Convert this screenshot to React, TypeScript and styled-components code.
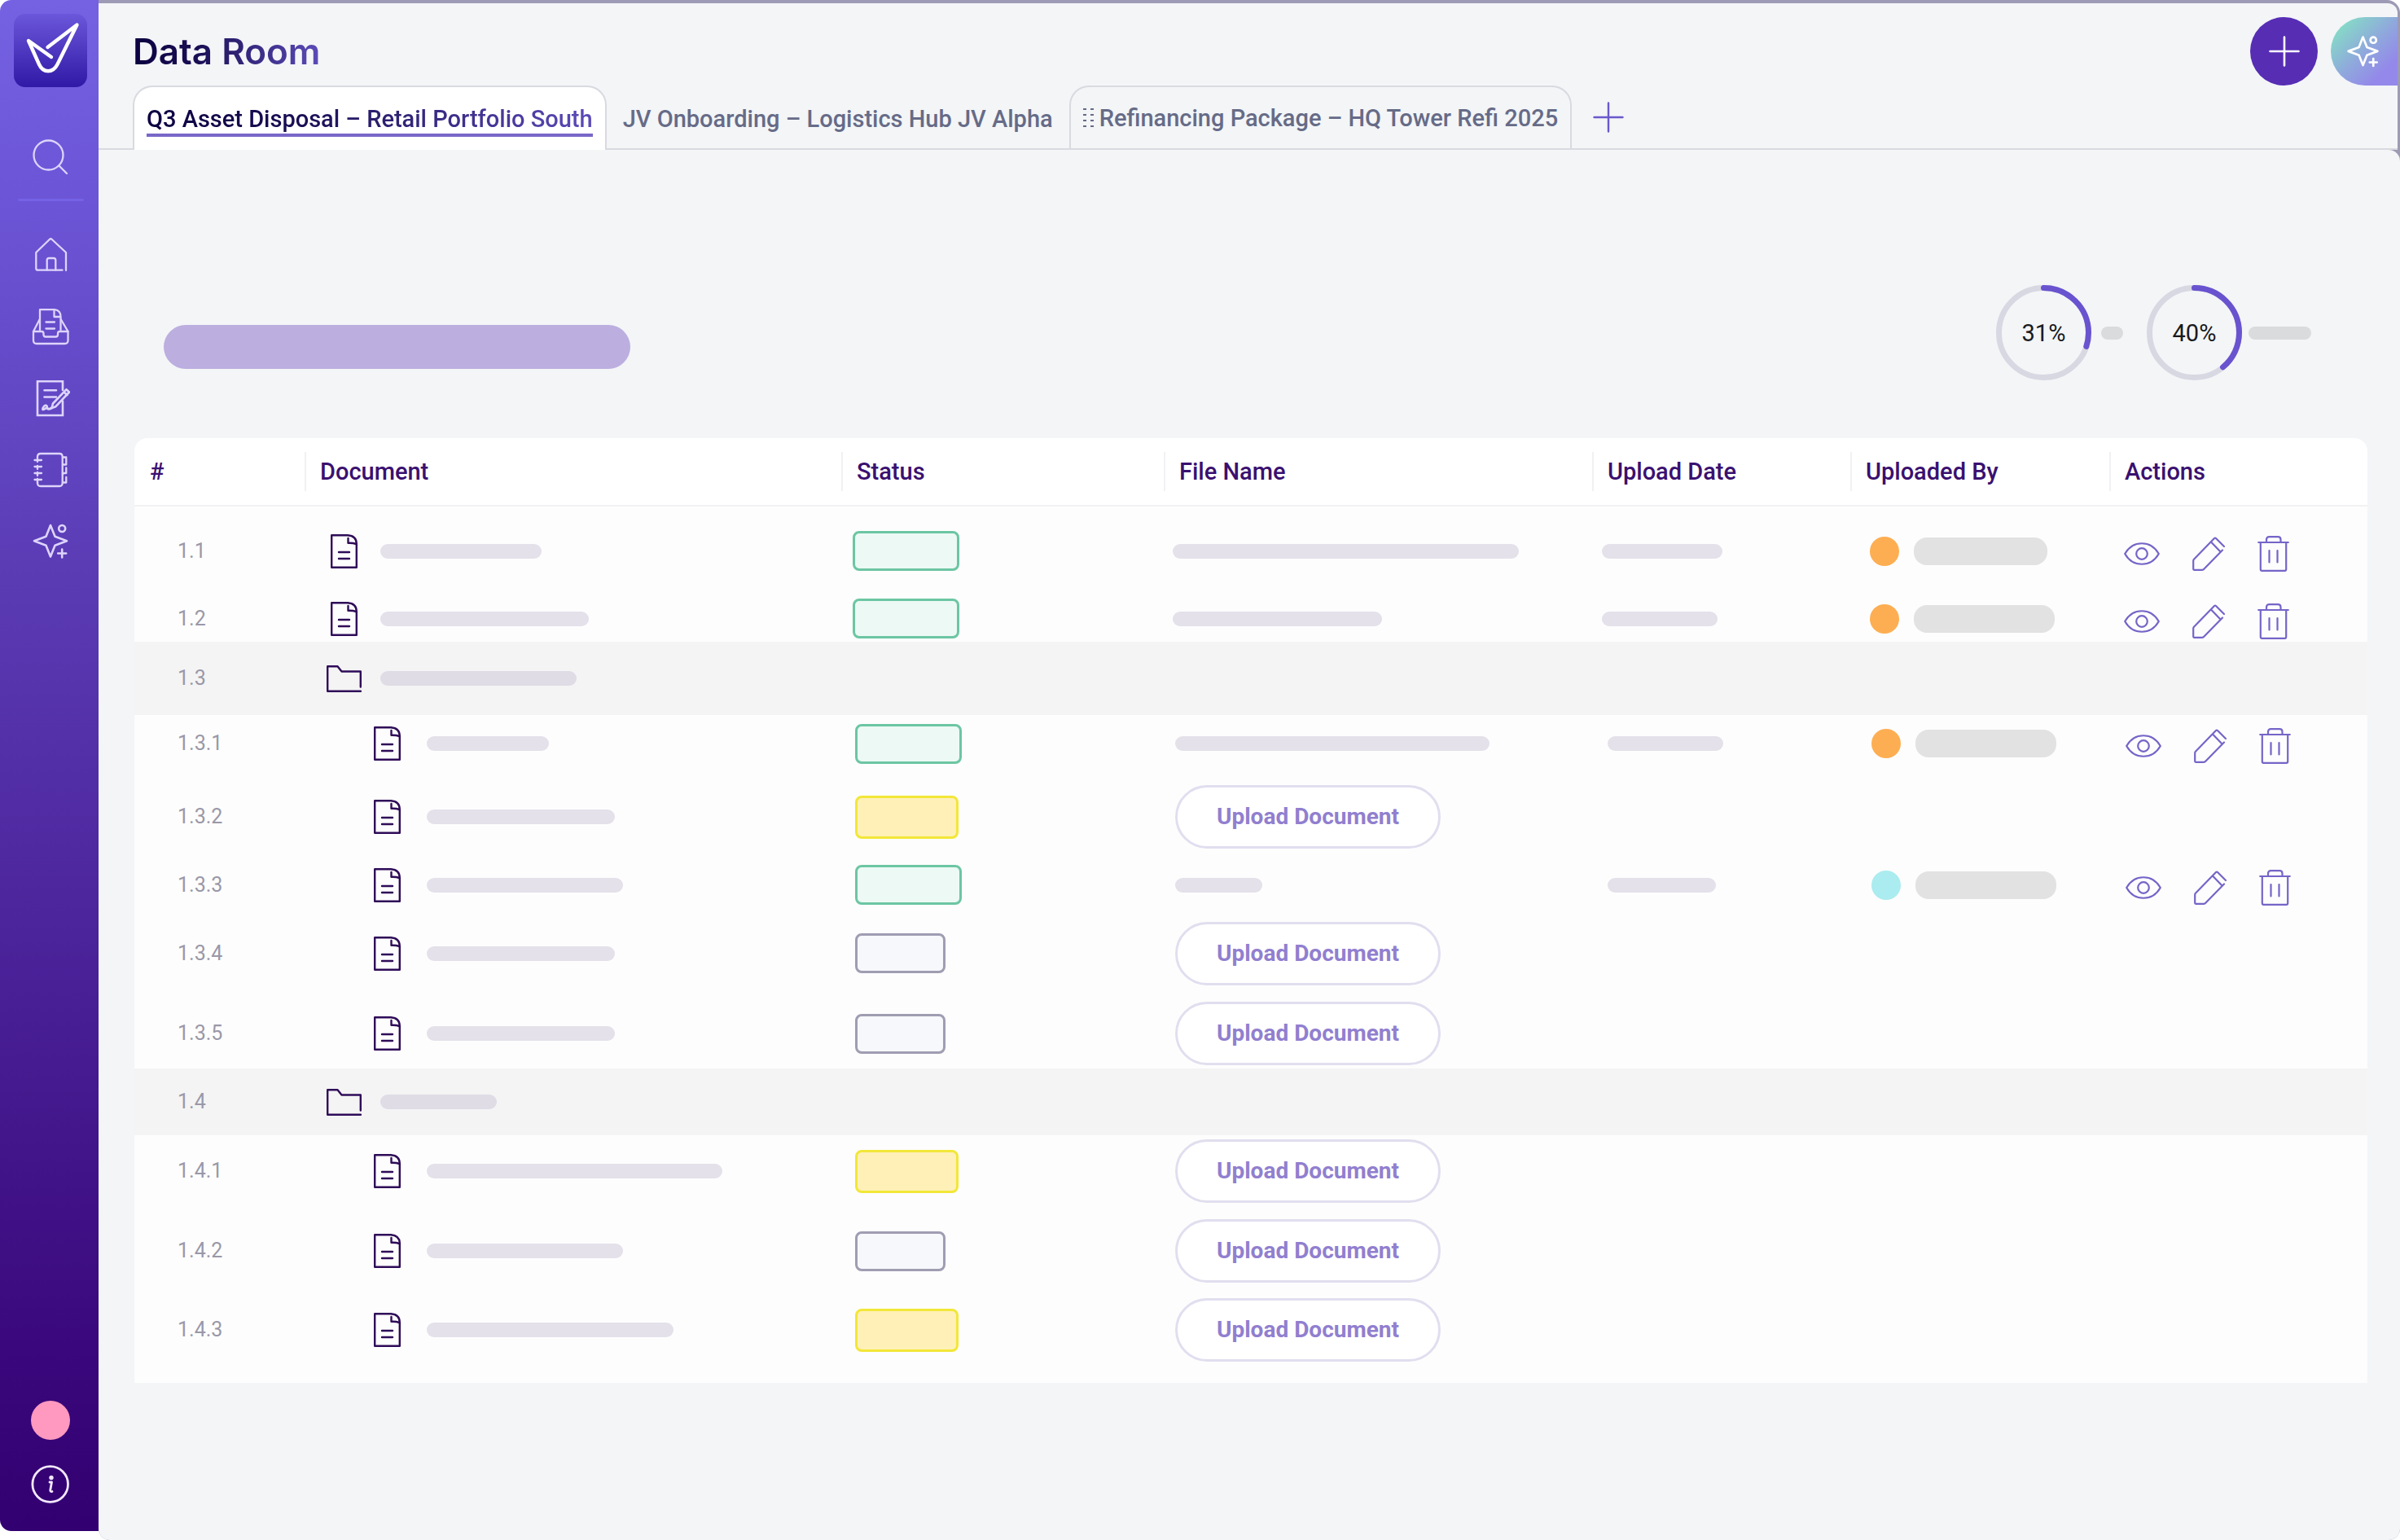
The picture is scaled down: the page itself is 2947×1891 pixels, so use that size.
import React from "react";
import styled, { createGlobalStyle, css } from "styled-components";

const GlobalStyle = createGlobalStyle`
  *, *::before, *::after { box-sizing: border-box; }
  body {
    margin: 0;
    background: #ffffff;
    font-family: Roboto, "Liberation Sans", sans-serif;
    color: #1a1a1e;
  }
  button { font: inherit; color: inherit; background: none; border: 0; padding: 0; cursor: pointer; }
  svg { display: block; fill: none; stroke: currentColor; stroke-linecap: round; stroke-linejoin: round; }
`;

/* ---------- shell ---------- */

const Shell = styled.div`
  display: grid;
  grid-template-columns: 121px minmax(0, 1fr);
  min-height: 100vh;
`;

const Sidebar = styled.aside`
  display: flex;
  flex-direction: column;
  align-items: center;
  margin-bottom: 11px;
  padding: 17px 0 34px 3px;
  border-radius: 14px 0 0 14px;
  background: linear-gradient(180deg, #7462e3 0%, #6b54d5 14%, #5b3cb5 37%, #3a087c 88%, #320070 100%);
  color: #ddd4fb;
`;

const Logo = styled.a`
  display: block;
  width: 90px;
  height: 90px;
  margin-bottom: 61px;
  border-radius: 14px;
  background: linear-gradient(180deg, #6b57da 0%, #3019a6 100%);
  color: #ffffff;
`;

const SideButton = styled.button`
  display: grid;
  place-items: center;
  width: 48px;
  height: 48px;
`;

const SideDivider = styled.hr`
  width: 81px;
  height: 3px;
  margin: 28px 0 42px;
  border: 0;
  border-radius: 2px;
  background: #7562e6;
`;

const SideNav = styled.nav`
  display: flex;
  flex-direction: column;
  gap: 40px;
`;

const SideFooter = styled.div`
  display: flex;
  flex-direction: column;
  gap: 30px;
  margin-top: auto;
  color: #f3e8ff;
`;

const UserButton = styled.button`
  width: 48px;
  height: 48px;
  border-radius: 50%;
  background: #ff99bf;
`;

const Main = styled.main`
  display: flex;
  flex-direction: column;
  min-width: 0;
  border-radius: 0 16px 14px 14px;
  background: #9c9ab4;
`;

/* ---------- header ---------- */

const Header = styled.header`
  margin: 4px 3px 0 0;
  border-radius: 0 12px 0 0;
  background: #f3f5f7;
`;

const TitleRow = styled.div`
  display: flex;
  align-items: center;
  gap: 16px;
  padding: 17px 0 0 42px;
`;

const Title = styled.h1`
  margin: 0 auto 0 0;
  font-family: Inter, "Open Sans", sans-serif;
  font-size: 44px;
  line-height: 56px;
  font-weight: 600;
  color: transparent;
  background: linear-gradient(90deg, #0b0040 0%, #1a0f55 35%, #5b4bb8 100%);
  background-clip: text;
  -webkit-background-clip: text;
`;

const AddButton = styled.button`
  display: grid;
  place-items: center;
  width: 83px;
  height: 84px;
  border-radius: 50%;
  background: #572db4;
  color: #ffffff;
`;

const AssistButton = styled.button`
  display: flex;
  align-items: center;
  width: 82px;
  height: 84px;
  padding-left: 18px;
  border-radius: 42px 0 0 42px;
  background: linear-gradient(135deg, #85dcc6 12%, #8fa9dc 50%, #9488ea 80%);
  color: #ffffff;
`;

const TabBar = styled.nav`
  display: flex;
  align-items: stretch;
  height: 79px;
  padding-left: 42px;
  border-bottom: 2px solid #d8dae0;
`;

const Tab = styled.button<{ $look: "active" | "plain" | "outlined" }>`
  display: flex;
  align-items: center;
  gap: 7px;
  margin-bottom: -2px;
  padding: 0 15px;
  border: 2px solid transparent;
  border-bottom: 0;
  border-radius: 24px 24px 0 0;
  font-size: 29px;
  line-height: 36px;
  font-weight: 500;
  white-space: nowrap;
  color: #666b87;
  ${({ $look }) => $look === "active" && css`
    background: #ffffff;
    border-color: #d8dae0;
  `}
  ${({ $look }) => $look === "plain" && css`
    padding: 0 18px;
  `}
  ${({ $look }) => $look === "outlined" && css`
    margin-bottom: 0;
    border-color: #d8dae0;
  `}
`;

const ActiveLabel = styled.span`
  padding-top: 4px;
  border-bottom: 4px solid #7967c8;
  line-height: 36px;
  color: transparent;
  background: linear-gradient(90deg, #0b0040 0%, #1a0f55 35%, #5b4bb8 100%);
  background-clip: text;
  -webkit-background-clip: text;
`;

const AddTab = styled.button`
  display: grid;
  place-items: center;
  padding: 0 26px;
  color: #6a58cc;
`;

/* ---------- summary ---------- */

const Content = styled.div`
  flex: 1;
  padding: 166px 40px 40px 44px;
  border-radius: 0 14px 14px 14px;
  background: #f3f5f7;
`;

const Summary = styled.section`
  display: flex;
  align-items: flex-end;
  padding: 0 69px 71px 36px;
`;

const SummaryName = styled.div`
  width: 573px;
  height: 54px;
  margin: 0 auto 14px 0;
  border-radius: 27px;
  background: #bcaedf;
`;

const Progress = styled.div<{ $gap: number }>`
  display: flex;
  align-items: center;
  gap: ${({ $gap }) => $gap}px;
  & + & { margin-left: 29px; }
`;

const Dial = styled.div`
  display: grid;
  place-items: center;
  font-size: 29px;
  line-height: 36px;
  & > * { grid-area: 1 / 1; }
`;

const DialNote = styled.span<{ $w: number }>`
  width: ${({ $w }) => $w}px;
  height: 16px;
  border-radius: 8px;
  background: #dadbdd;
`;

/* ---------- table ---------- */

const Table = styled.table`
  width: 100%;
  table-layout: fixed;
  border-collapse: separate;
  border-spacing: 0;
  text-align: left;
`;

const Col = styled.col<{ $w?: number }>`
  width: ${({ $w }) => ($w ? `${$w}px` : "auto")};
`;

const HeadCell = styled.th`
  padding: 17px 0;
  border-bottom: 2px solid #f2f2f4;
  background: #ffffff;
  font-size: 29px;
  line-height: 48px;
  font-weight: 500;
  color: #3a1070;
  &:first-child { border-top-left-radius: 16px; }
  &:last-child { border-top-right-radius: 16px; }
`;

const HeadLabel = styled.div<{ $ruled: boolean }>`
  padding-left: 17px;
  border-left: 2px solid ${({ $ruled }) => ($ruled ? "#f1f1f3" : "transparent")};
`;

const Row = styled.tr<{ $h: number; $folder?: boolean }>`
  height: ${({ $h }) => $h}px;
  background: ${({ $folder }) => ($folder ? "#f4f4f4" : "#fdfdfd")};
`;

const Cell = styled.td<{ $left: number }>`
  padding: 0 0 0 ${({ $left }) => $left}px;
  vertical-align: middle;
`;

const NumberText = styled.span`
  font-size: 25px;
  line-height: 32px;
  color: #9a98a8;
`;

const DocLine = styled.div<{ $nested: boolean }>`
  display: flex;
  align-items: center;
  gap: ${({ $nested }) => ($nested ? 27 : 23)}px;
`;

const IconSlot = styled.span`
  display: grid;
  place-items: center;
  width: 43px;
  color: #2f0c58;
`;

const Bar = styled.div<{ $w: number; $folder?: boolean }>`
  width: ${({ $w }) => $w}px;
  height: 18px;
  border-radius: 9px;
  background: ${({ $folder }) => ($folder ? "#dfdce6" : "#e4e1ea")};
`;

type BadgeKind = "done" | "pending" | "empty";

const badgeLook = {
  done: css`width: 131px; height: 49px; border: 3px solid #6cc6a3; background: #ecf9f4;`,
  pending: css`width: 127px; height: 53px; border: 3px solid #f2e738; background: #fff0b8;`,
  empty: css`width: 111px; height: 49px; border: 3px solid #9f9db2; background: #f7f8fb;`,
};

const Badge = styled.div<{ $kind: BadgeKind }>`
  border-radius: 8px;
  ${({ $kind }) => badgeLook[$kind]}
`;

const UploadButton = styled.button`
  display: block;
  height: 78px;
  padding: 0 48px;
  border: 3px solid #e1deef;
  border-radius: 39px;
  background: #ffffff;
  font-size: 28px;
  line-height: 36px;
  font-weight: 700;
  white-space: nowrap;
  color: #917fcf;
`;

const Person = styled.div`
  display: flex;
  align-items: center;
  gap: 18px;
`;

const Avatar = styled.span<{ $color: string }>`
  width: 36px;
  height: 36px;
  border-radius: 50%;
  background: ${({ $color }) => $color};
`;

const PersonName = styled.span<{ $w: number }>`
  width: ${({ $w }) => $w}px;
  height: 34px;
  border-radius: 16px;
  background: #e2e2e2;
`;

const Actions = styled.div`
  display: flex;
  align-items: center;
  gap: 40px;
  padding-top: 6px;
  color: #7565c8;
`;

/* ---------- icons ---------- */

const Glyph = ({ size = 48, stroke = 2.3, children }: { size?: number; stroke?: number; children: React.ReactNode }) => (
  <svg width={size} height={size} viewBox="0 0 48 48" strokeWidth={stroke} aria-hidden="true">{children}</svg>
);

const LogoMark = () => (
  <svg width="90" height="90" viewBox="0 0 90 90" strokeWidth="4.4" aria-hidden="true">
    <path d="M46 53 L18 33 L31 62 C36 73 48 73 53.500 62 L77.500 13.500 L41.500 41" />
  </svg>
);

const SearchIcon = () => (
  <Glyph><circle cx="21.500" cy="22.500" r="18" /><path d="M34.500 35.500 L44 45" /></Glyph>
);

const HomeIcon = () => (
  <Glyph><path d="M38.500 42.700 H8.500 Q6.300 42.700 6.300 40.500 V21 L22.800 5 Q24.300 3.600 25.800 5 L43 21 V43" /><path d="M19.700 42.500 V30.500 Q19.700 28 22.200 28 H27.800 Q30.300 28 30.300 30.500 V42.500" /></Glyph>
);

const InboxIcon = () => (
  <Glyph>
    <path d="M11 28 V3.200 H29 Q36.500 4 36.500 12 V28" />
    <path d="M28.500 5 V12 H36" />
    <path d="M18.500 18.500 H29 M18.500 26.500 H29" />
    <path d="M10.500 15.500 L3 30 V41 Q3 45 7 45 H41.500 Q45.500 45 45.500 41 V30 L37 15.500" />
    <path d="M3 30 H13 Q15.500 30 15.500 32.500 V34 Q15.500 36.500 18 36.500 H30.500 Q33 36.500 33 34 V32.500 Q33 30 35.500 30 H45.500" />
  </Glyph>
);

const SignIcon = () => (
  <Glyph stroke={2.6}>
    <path d="M39 14 V3.200 H8 V45 H39 V27.500" strokeLinejoin="miter" />
    <path d="M16.500 14.200 H31 M16.500 22.500 H31" />
    <path d="M25.500 36 L27 30.500 L43.500 13.200 L47 16.500 L30.500 34.200 Z M40.500 16.500 L44.500 20" />
    <path d="M24.500 36 C21 38.500 20 36.500 19.500 33.500 C17.500 31 14 35.500 14.500 38 C16 38.500 18.500 36 19.800 35 M19.800 36.500 Q22 38.500 26 36" />
  </Glyph>
);

const NotebookIcon = () => (
  <Glyph>
    <path d="M8 9 V8 Q8 4 12 4 H35 Q38.700 4 38.700 8 V40 Q38.700 44 35 44 H12 Q8 44 8 40 V39" />
    <path d="M4.500 12 H13 M4.500 20 H13 M4.500 28 H13 M4.500 36 H13 M8 9 V14 M8 19 V23 M8 27 V31 M8 35 V40" />
    <path d="M39 8.500 H43.300 V17.500 H39 M43.300 21.500 V28 H39 V30 M43.300 33 V39.500 H39" />
  </Glyph>
);

const SparkIcon = ({ size = 48, stroke = 2.6 }: { size?: number; stroke?: number }) => (
  <Glyph size={size} stroke={stroke}>
    <path d="M24 4 L29.500 17.800 L44 23.300 L29.500 28.800 L24 42.500 L18.500 28.800 L4 23.300 L18.500 17.800 Z" />
    <circle cx="38.200" cy="8" r="4" />
    <path d="M38.200 33.500 V43.500 M33.200 38.500 H43.200" />
  </Glyph>
);

const InfoIcon = () => (
  <Glyph stroke={2.8}>
    <circle cx="23.700" cy="24.500" r="21.800" />
    <circle cx="25" cy="16.500" r="1.300" />
    <path d="M23 22 H25.500 L23.800 31.500 Q23.500 34 26 33.500" />
  </Glyph>
);

const PlusIcon = ({ stroke }: { stroke: number }) => (
  <svg width="38" height="38" viewBox="0 0 38 38" strokeWidth={stroke} aria-hidden="true"><path d="M19 1.500 V36.500 M1.500 19 H36.500" /></svg>
);

const GripIcon = () => (
  <svg width="13" height="23" viewBox="0 0 13 23" strokeWidth="0" aria-hidden="true">
    {[1, 8, 15, 22].map((y) => (
      <g key={y} fill="#666b87"><rect x="0" y={y - 1} width="4" height="2" /><rect x="9" y={y - 1} width="4" height="2" /></g>
    ))}
  </svg>
);

const FileIcon = () => (
  <svg width="33" height="42" viewBox="0 0 33 42" strokeWidth="2.400" aria-hidden="true">
    <path d="M1.200 1.200 H21 Q31.800 2 31.800 12 V40.800 H1.200 Z" />
    <path d="M21.500 5 V10.800 Q27 10.500 31.500 12" />
    <path d="M10 22 H23 M10 30 H23" />
  </svg>
);

const FolderIcon = () => (
  <svg width="43" height="33" viewBox="0 0 43 33" strokeWidth="2.400" aria-hidden="true">
    <path d="M41.800 26.500 V7.500 H18.500 L13.500 1.200 H1.200 V31.800 H42" />
  </svg>
);

const EyeIcon = () => (
  <svg width="44" height="32" viewBox="0 0 44 32" strokeWidth="2.200" aria-hidden="true">
    <path d="M1.200 16 C11 -1 33 -1 42.800 16 C33 33 11 33 1.200 16 Z" /><circle cx="22" cy="16" r="6.800" />
  </svg>
);

const PencilIcon = () => (
  <svg width="40" height="42" viewBox="0 0 40 42" strokeWidth="2.200" aria-hidden="true">
    <path d="M37 16.500 L14.500 39.500 Q13.500 40.800 12 40.800 H2.500 Q1.200 40.800 1.200 39.500 V29.500 Q1.200 28.500 2.200 27.500 L27 2 Q28 1 29 2 L39 12 M23 6.500 L34.500 18.500" />
  </svg>
);

const TrashIcon = () => (
  <svg width="39" height="44" viewBox="0 0 39 44" strokeWidth="2.200" aria-hidden="true">
    <path d="M1.200 8 H37.800 M3.800 8 V41 Q3.800 42.800 5.500 42.800 H33.500 Q35.200 42.800 35.200 41 V8 M11 8 V4.500 Q11 1.200 14.500 1.200 H25 Q28.500 1.200 28.500 4.500 V8 M14.500 18 V32.500 M24.500 18 V32.500" />
  </svg>
);

/* ---------- data ---------- */

type Entry = {
  no: string;
  h: number;
  title: number;
  kind: "file" | "folder";
  nested?: boolean;
  badge?: BadgeKind;
  upload?: boolean;
  name?: number;
  date?: number;
  person?: { color: string; w: number };
};

const orange = "#fdae52";
const cyan = "#aaecef";

const entries: Entry[] = [
  { no: "1.1", h: 109, title: 198, kind: "file", badge: "done", name: 425, date: 148, person: { color: orange, w: 164 } },
  { no: "1.2", h: 57, title: 256, kind: "file", badge: "done", name: 257, date: 142, person: { color: orange, w: 173 } },
  { no: "1.3", h: 90, title: 241, kind: "folder" },
  { no: "1.3.1", h: 70, title: 150, kind: "file", nested: true, badge: "done", name: 386, date: 142, person: { color: orange, w: 173 } },
  { no: "1.3.2", h: 110, title: 231, kind: "file", nested: true, badge: "pending", upload: true },
  { no: "1.3.3", h: 57, title: 241, kind: "file", nested: true, badge: "done", name: 107, date: 133, person: { color: cyan, w: 173 } },
  { no: "1.3.4", h: 111, title: 231, kind: "file", nested: true, badge: "empty", upload: true },
  { no: "1.3.5", h: 86, title: 231, kind: "file", nested: true, badge: "empty", upload: true },
  { no: "1.4", h: 82, title: 143, kind: "folder" },
  { no: "1.4.1", h: 88, title: 363, kind: "file", nested: true, badge: "pending", upload: true },
  { no: "1.4.2", h: 108, title: 241, kind: "file", nested: true, badge: "empty", upload: true },
  { no: "1.4.3", h: 86, title: 303, kind: "file", nested: true, badge: "pending", upload: true },
];

const columns = ["#", "Document", "Status", "File Name", "Upload Date", "Uploaded By", "Actions"];

const ProgressDial = ({ value }: { value: number }) => (
  <Dial role="img" aria-label={`${value}% complete`}>
    <svg width="117" height="117" viewBox="0 0 117 117" strokeWidth="7">
      <circle cx="58.500" cy="58.500" r="55" stroke="#d8d8e2" />
      <circle cx="58.500" cy="58.500" r="55" stroke="#6953cf" pathLength={100} strokeDasharray={`${value - 1} 100`} transform="rotate(-90 58.500 58.500)" />
    </svg>
    <span>{value}%</span>
  </Dial>
);

const EntryRow = ({ entry }: { entry: Entry }) => {
  const nested = !!entry.nested;
  const folder = entry.kind === "folder";
  return (
    <Row $h={entry.h} $folder={folder}>
      <Cell $left={53}><NumberText>{entry.no}</NumberText></Cell>
      <Cell $left={nested ? 80 : 27}>
        <DocLine $nested={nested}>
          <IconSlot>{folder ? <FolderIcon /> : <FileIcon />}</IconSlot>
          <Bar $w={entry.title} $folder={folder} />
        </DocLine>
      </Cell>
      <Cell $left={nested ? 17 : 14}>{entry.badge && <Badge $kind={entry.badge} />}</Cell>
      <Cell $left={nested ? 14 : 11}>
        {entry.upload && <UploadButton type="button">Upload Document</UploadButton>}
        {entry.name && <Bar $w={entry.name} />}
      </Cell>
      <Cell $left={nested ? 19 : 12}>{entry.date && <Bar $w={entry.date} />}</Cell>
      <Cell $left={nested ? 26 : 24}>
        {entry.person && (
          <Person><Avatar $color={entry.person.color} /><PersonName $w={entry.person.w} /></Person>
        )}
      </Cell>
      <Cell $left={nested ? 20 : 18}>
        {entry.person && (
          <Actions>
            <button type="button" aria-label={`View ${entry.no}`}><EyeIcon /></button>
            <button type="button" aria-label={`Edit ${entry.no}`}><PencilIcon /></button>
            <button type="button" aria-label={`Delete ${entry.no}`}><TrashIcon /></button>
          </Actions>
        )}
      </Cell>
    </Row>
  );
};

const TailCell = styled.td`
  height: 22px;
  padding: 0;
  background: #fdfdfd;
`;

export default function App() {
  return (
    <>
      <GlobalStyle />
      <Shell>
        <Sidebar>
          <Logo href="#" aria-label="Start page"><LogoMark /></Logo>
          <SideButton type="button" aria-label="Search"><SearchIcon /></SideButton>
          <SideDivider />
          <SideNav aria-label="Main">
            <SideButton type="button" aria-label="Home"><HomeIcon /></SideButton>
            <SideButton type="button" aria-label="Inbox"><InboxIcon /></SideButton>
            <SideButton type="button" aria-label="Contracts"><SignIcon /></SideButton>
            <SideButton type="button" aria-label="Contacts"><NotebookIcon /></SideButton>
            <SideButton type="button" aria-label="Assistant"><SparkIcon /></SideButton>
          </SideNav>
          <SideFooter>
            <UserButton type="button" aria-label="Profile" />
            <SideButton type="button" aria-label="Information"><InfoIcon /></SideButton>
          </SideFooter>
        </Sidebar>
        <Main>
          <Header>
            <TitleRow>
              <Title>Data Room</Title>
              <AddButton type="button" aria-label="Add"><PlusIcon stroke={2.6} /></AddButton>
              <AssistButton type="button" aria-label="Assistant"><SparkIcon size={43} stroke={3} /></AssistButton>
            </TitleRow>
            <TabBar aria-label="Data rooms">
              <Tab type="button" $look="active"><ActiveLabel>Q3 Asset Disposal – Retail Portfolio South</ActiveLabel></Tab>
              <Tab type="button" $look="plain">JV Onboarding – Logistics Hub JV Alpha</Tab>
              <Tab type="button" $look="outlined"><GripIcon />Refinancing Package – HQ Tower Refi 2025</Tab>
              <AddTab type="button" aria-label="Add tab"><PlusIcon stroke={2.4} /></AddTab>
            </TabBar>
          </Header>
          <Content>
            <Summary>
              <SummaryName />
              <Progress $gap={12}><ProgressDial value={31} /><DialNote $w={27} /></Progress>
              <Progress $gap={8}><ProgressDial value={40} /><DialNote $w={77} /></Progress>
            </Summary>
            <Table>
              <colgroup>
                <Col $w={209} /><Col /><Col $w={396} /><Col $w={526} /><Col $w={317} /><Col $w={318} /><Col $w={317} />
              </colgroup>
              <thead>
                <tr>
                  {columns.map((name, i) => (
                    <HeadCell key={name} scope="col"><HeadLabel $ruled={i > 0}>{name}</HeadLabel></HeadCell>
                  ))}
                </tr>
              </thead>
              <tbody>
                {entries.map((entry) => <EntryRow key={entry.no} entry={entry} />)}
                <tr><TailCell colSpan={7} /></tr>
              </tbody>
            </Table>
          </Content>
        </Main>
      </Shell>
    </>
  );
}
